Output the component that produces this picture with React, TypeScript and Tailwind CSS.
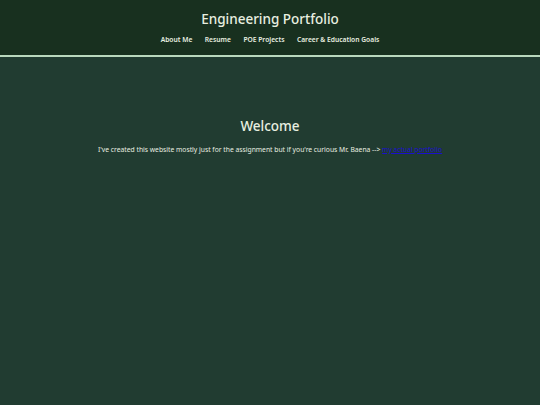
export default function App() {
  const links = ['About Me', 'Resume', 'POE Projects', 'Career & Education Goals'];
  return (
    <div className="min-h-[405px] bg-[#213c31] text-[#e8efe0]" style={{ fontFamily: '"Noto Sans", sans-serif' }}>
      <header className="bg-[#18301f] border-b-2 border-[#b9d8bd] pt-[9px] pb-[10px] text-center">
        <h1 className="text-[13.5px] font-medium leading-[20px]">Engineering Portfolio</h1>
        <nav className="mt-[6px] flex justify-center gap-[12.5px] text-[6.7px] font-semibold leading-[10px]">
          {links.map((l) => (
            <a key={l} href="#" className="text-[#e8efe0]">
              {l}
            </a>
          ))}
        </nav>
      </header>
      <main className="pt-[59px] text-center">
        <h2 className="text-[13.5px] font-medium leading-[20px]">Welcome</h2>
        <p className="mt-[9px] text-[6.75px] leading-[10px]">
          I've created this website mostly just for the assignment but if you're curious Mr. Baena --&gt;{' '}
          <a href="#" className="text-[#1a0fd0] underline">my actual portfolio</a>
        </p>
      </main>
    </div>
  );
}
